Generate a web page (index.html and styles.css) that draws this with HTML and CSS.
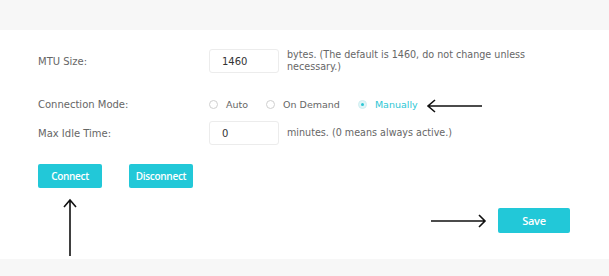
FILE: index.html
```html
<!DOCTYPE html>
<html>
<head>
    <meta charset="UTF-8">
    <title>PPPoE Settings</title>
    <link rel="stylesheet" href="styles.css">
</head>
<body>
    <div class="top-band"></div>

    <div class="panel">
        <!-- MTU -->
        <div class="row row-mtu">
            <label class="row-label">MTU Size:</label>
            <div class="row-value">
                <input class="text-box" type="text" value="1460">
                <span class="hint">bytes. (The default is 1460, do not change unless<br>necessary.)</span>
            </div>
        </div>

        <!-- connection mode -->
        <div class="row row-mode">
            <label class="row-label">Connection Mode:</label>
            <div class="row-value radios">
                <span class="radio"><i class="dot"></i>Auto</span>
                <span class="radio"><i class="dot"></i>On Demand</span>
                <span class="radio checked"><i class="dot"></i>Manually</span>
                <svg class="arrow arrow-left" width="58" height="14" viewBox="0 0 58 14">
                    <path d="M2 7 H56 M9 1 L2 7 L9 13" fill="none" stroke="#111" stroke-width="1.6"/>
                </svg>
            </div>
        </div>

        <div class="row row-idle">
            <label class="row-label">Max Idle Time:</label>
            <div class="row-value">
                <input class="text-box" type="text" value="0">
                <span class="hint">minutes. (0 means always active.)</span>
            </div>
        </div>

        <div class="actions">
            <button class="btn">Connect</button>
            <button class="btn">Disconnect</button>
            <svg class="arrow arrow-up" width="14" height="58" viewBox="0 0 14 58">
                <path d="M7 2 V58 M1 9 L7 2 L13 9" fill="none" stroke="#111" stroke-width="1.6"/>
            </svg>
        </div>

        <div class="save-row">
            <svg class="arrow-right" width="58" height="14" viewBox="0 0 58 14">
                <path d="M1 7 H55 M49 1 L55 7 L49 13" fill="none" stroke="#111" stroke-width="1.6"/>
            </svg>
            <button class="btn btn-save">Save</button>
        </div>
    </div>

    <div class="bottom-band"></div>
</body>
</html>
```

FILE: styles.css
```css
/* Global */
* {
    margin: 0;
    padding: 0;
    box-sizing: border-box;
}

body {
    font-family: "DejaVu Sans", Verdana, sans-serif;
    font-size: 10px;
    color: #666;
    background: #fff;
}

.top-band {
    height: 30px;
    background-color: #f7f7f7;
}

.bottom-band {
    height: 17px;
    background-color: #f7f7f7;
}

/* Form panel */
.panel {
    height: 229px;
    padding: 19px 0 0 38px;
    position: relative;
}

.row {
    display: flex;
    align-items: center;
}

.row-label {
    width: 171px;
    flex-shrink: 0;
}

.row-value {
    display: flex;
    align-items: center;
}

.row-mode {
    margin-top: 24px;
    height: 14px;
}

.row-idle {
    margin-top: 10px;
}

.text-box {
    width: 70px;
    height: 24px;
    border: 1px solid #ececec;
    border-radius: 3px;
    padding-left: 12px;
    font-family: "DejaVu Sans", Verdana, sans-serif;
    font-size: 10px;
    color: #333;
    background: #fff;
}

.hint {
    margin-left: 8px;
    line-height: 12px;
    font-size: 9.6px;
}

/* Radios */
.radios {
    position: relative;
}

.radio {
    display: flex;
    align-items: center;
    margin-right: 18px;
    font-size: 9.5px;
}

.radio .dot {
    width: 9px;
    height: 9px;
    border: 1px solid #cfcfcf;
    border-radius: 50%;
    margin: 0 8px 0 0;
    position: relative;
}

.radio.checked {
    color: #2cc6d4;
}

.radio.checked .dot {
    background: #dff5f7;
    border-color: #d0eef1;
}

.radio.checked .dot:after {
    content: "";
    position: absolute;
    left: 2px;
    top: 2px;
    width: 3px;
    height: 3px;
    border-radius: 50%;
    background: #2cc6d4;
}

.arrow-left {
    position: absolute;
    left: 217px;
    top: 0;
}

/* Buttons */
.actions {
    margin-top: 19px;
    display: flex;
    gap: 27px;
    position: relative;
}

.btn {
    width: 64px;
    height: 24px;
    border: none;
    border-radius: 2px;
    background-color: #22c8d8;
    color: #fff;
    font-family: "Open Sans", sans-serif;
    font-size: 10px;
    font-weight: 600;
    letter-spacing: -0.3px;
    cursor: pointer;
}

.arrow-up {
    position: absolute;
    left: 25px;
    top: 34px;
}

.save-row {
    display: flex;
    justify-content: flex-end;
    align-items: center;
    gap: 10px;
    margin-top: 20px;
    padding-right: 39px;
}

.btn-save {
    width: 72px;
    height: 25px;
    font-size: 11px;
}
```
